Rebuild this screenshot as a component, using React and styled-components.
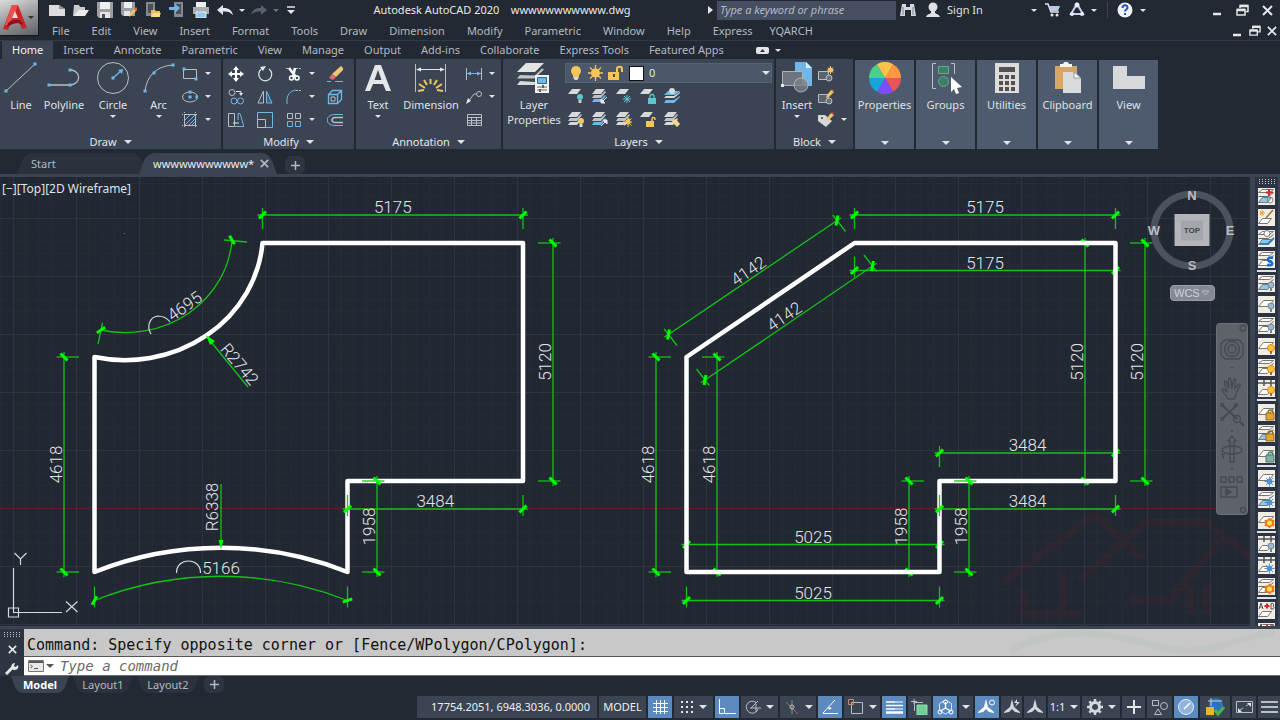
import React from "react";
import styled, { createGlobalStyle, css } from "styled-components";

const c = {
  bg: "#222933",
  canvas: "#212832",
  panel: "#3b4453",
  raised: "#4e5a6d",
  line: "#323c48",
  text: "#dfe2e6",
  dim: "#b4b9c0",
  blue: "#5b8abf",
  sky: "#6cb5e6",
  paper: "#d8dadc",
  yellow: "#f4c55c",
  green: "#00ff00",
};

const Global = createGlobalStyle`
  * { box-sizing: border-box; }
  body { margin: 0; background: ${c.bg}; }
  button, input, select { font: inherit; color: inherit; border: 0; background: none; padding: 0; margin: 0; }
  button { cursor: pointer; }
`;

const Screen = styled.div`
  min-height: 100vh;
  display: flex;
  flex-direction: column;
  background: ${c.bg};
  color: ${c.text};
  font: 11px/16px "Noto Sans", "Open Sans", sans-serif;
  overflow: hidden;
`;

/* ---------- shared bits ---------- */
const Svg = ({ w = 16, h = 16, children, ...rest }) => (
  <svg width={w} height={h} viewBox={`0 0 ${w} ${h}`} fill="none" aria-hidden="true" {...rest}>
    {children}
  </svg>
);

const CaretShape = styled.span`
  flex: none;
  width: 0;
  height: 0;
  border: solid transparent;
  border-width: ${(p) => (p.$big ? "4px 4px 0" : "3px 3px 0")};
  border-top-color: ${(p) => p.$color || c.text};
`;

const IconButton = styled.button`
  flex: none;
  display: flex;
  align-items: center;
  justify-content: center;
  gap: 5px;
  width: ${(p) => p.$w || 24}px;
  height: ${(p) => p.$h || 20}px;
`;

/* ---------- header ---------- */
const Header = styled.header`
  display: flex;
  border-bottom: 1px solid ${c.line};
`;
const Logo = styled.button`
  flex: none;
  width: 39px;
  height: 36px;
  display: flex;
  align-items: center;
  gap: 1px;
  padding-left: 3px;
  background: linear-gradient(160deg, #dcdcdc, #8b8d90 60%, #5e6064);
  border-right: 1px solid #14181e;
  border-bottom: 1px solid #14181e;
`;
const HeaderRows = styled.div`
  flex: 1;
  min-width: 0;
`;
const TitleRow = styled.div`
  display: flex;
  align-items: center;
  height: 20px;
  padding: 0 0 0 6px;
`;
const Title = styled.h1`
  flex: 1;
  margin: 0;
  font: inherit;
  color: #e6e8ea;
  text-align: center;
  white-space: pre;
`;
const Search = styled.input`
  flex: none;
  width: 179px;
  height: 19px;
  padding: 0 3px 1px;
  background: #454f61;
  font-style: italic;
  &::placeholder { color: #b3bac4; opacity: 1; }
`;
const SignIn = styled.button`
  flex: none;
  display: flex;
  align-items: center;
  gap: 7px;
  width: 107px;
  padding-left: 6px;
`;
const Divider = styled.span`
  width: 1px;
  height: 16px;
  margin: 0 5px 0 8px;
  background: #3d4652;
`;
const WindowButtons = styled.div`
  display: flex;
  align-items: center;
  margin-left: ${(p) => (p.$small ? "auto" : "56px")};
`;
const MenuRow = styled.nav`
  display: flex;
  align-items: center;
  height: 20px;
  padding: 2px 0 0 13px;
`;
const MenuItem = styled.button`
  padding-right: ${(p) => p.$gap}px;
  color: ${c.dim};
  line-height: 18px;
`;

/* ---------- ribbon ---------- */
const RibbonTabs = styled.nav`
  display: flex;
  align-items: stretch;
  height: 18px;
  padding-left: 2px;
`;
const RibbonTab = styled.button`
  padding: 0 10px;
  line-height: 18px;
  color: ${(p) => (p.$active ? "#f0f2f4" : c.dim)};
  background: ${(p) => (p.$active ? c.panel : "none")};
`;
const RibbonToggle = styled.button`
  display: flex;
  align-items: center;
  gap: 6px;
  margin-left: 22px;
`;
const Ribbon = styled.div`
  display: flex;
  height: 90px;
  gap: 2px;
`;
const Panel = styled.section`
  flex: none;
  display: flex;
  flex-direction: column;
  width: ${(p) => p.$w}px;
  background: ${c.panel};
`;
const PanelBody = styled.div`
  flex: 1;
  display: flex;
  padding-left: ${(p) => p.$pad || 0}px;
`;
const PanelTitle = styled.button`
  display: flex;
  align-items: center;
  justify-content: center;
  gap: 7px;
  height: 16px;
  padding-top: 1px;
  color: #e4e7ea;
`;
const BigButton = styled.button`
  flex: none;
  display: flex;
  flex-direction: column;
  align-items: center;
  width: ${(p) => p.$w}px;
  padding-top: 3px;
  line-height: 15px;
  & > svg { margin-bottom: 3px; }
  & > ${CaretShape} { margin-top: 3px; }
`;
const ToolGrid = styled.div`
  display: grid;
  grid-template-columns: ${(p) => p.$cols};
  grid-auto-rows: 23px;
  align-content: start;
  padding: 3px 0 0 ${(p) => p.$pad || 0}px;
`;
const Tool = styled.button`
  display: flex;
  align-items: center;
  gap: 7px;
`;
const Collapsed = styled.button`
  flex: none;
  display: flex;
  flex-direction: column;
  align-items: center;
  width: 59px;
  height: 89px;
  margin-top: 1px;
  padding: 2px 0 4px;
  background: ${c.raised};
  line-height: 15px;
  & > svg { margin-bottom: 3px; }
  & > ${CaretShape} { margin-top: auto; }
`;
const LayerArea = styled.div`
  display: flex;
  flex-direction: column;
  padding-top: 4px;
`;
const LayerBox = styled.label`
  display: flex;
  align-items: center;
  gap: 5px;
  width: 207px;
  height: 20px;
  padding: 0 1px 0 3px;
  background: #4c5869;
  border: 1px solid #566376;
`;
const LayerSelect = styled.select`
  flex: 1;
  appearance: none;
  outline: 0;
`;
const Swatch = styled.span`
  width: 15px;
  height: 15px;
  background: #fff;
  border: 1px solid #111;
`;
const LayerTools = styled.div`
  display: grid;
  grid-template-columns: repeat(5, 24px);
  grid-auto-rows: 23px;
  padding: 1px 0 0 3px;
`;

/* ---------- file tabs ---------- */
const FileTabs = styled.div`
  display: flex;
  align-items: flex-end;
  height: 28px;
  padding-left: 21px;
  border-bottom: 3px solid ${c.panel};
`;
const slanted = css`
  position: relative;
  isolation: isolate;
  &::before, &::after {
    content: "";
    position: absolute;
    z-index: -1;
    top: 0;
    bottom: 0;
    width: 60%;
    background: ${(p) => (p.$active ? c.panel : "#2b323e")};
  }
`;
const FileTab = styled.div`
  ${slanted}
  display: flex;
  align-items: center;
  gap: 6px;
  width: ${(p) => p.$w}px;
  height: 21px;
  padding-left: 10px;
  color: ${(p) => (p.$active ? "#e8eaec" : c.dim)};
  &::before { left: 0; transform: skewX(-20deg); border-radius: 8px 0 0 0; }
  &::after { right: 0; transform: skewX(20deg); border-radius: 0 8px 0 0; }
`;
const AddTab = styled.button`
  width: 20px;
  height: ${(p) => p.$h}px;
  margin-left: ${(p) => p.$ml}px;
  display: flex;
  align-items: center;
  justify-content: center;
  background: #2d3541;
  border-radius: 6px;
`;

/* ---------- work area ---------- */
const Work = styled.main`
  flex: 1;
  display: flex;
  min-height: 449px;
`;
const Canvas = styled.div`
  flex: 1;
  position: relative;
  overflow: hidden;
  background: ${c.canvas};
`;
const Drawing = styled.svg`
  position: absolute;
  inset: 0;
  width: 100%;
  height: 100%;
`;
const ViewLabel = styled.button`
  position: absolute;
  left: 2px;
  top: 4px;
  font-size: 12px;
`;
const Cube = styled.div`
  position: absolute;
  top: 6px;
  right: 12px;
`;
const Wcs = styled.button`
  position: absolute;
  top: 108px;
  right: 35px;
  display: flex;
  align-items: center;
  justify-content: space-between;
  width: 45px;
  height: 16px;
  padding: 0 4px 0 3px;
  border-radius: 4px;
  border: 1px solid #9a9eaa;
  background: #858995;
  color: #d0d2d8;
  font: 11px/14px "Liberation Sans", sans-serif;
`;
const NavBar = styled.div`
  position: absolute;
  top: 146px;
  right: 2px;
`;
const Dock = styled.aside`
  flex: none;
  width: 30px;
  height: 449px;
  overflow: hidden;
  border-left: 5px solid ${c.panel};
  border-right: 2px solid ${c.panel};
  background: #2c3443;
  display: flex;
  flex-direction: column;
  align-items: center;
  padding-top: 2px;
  gap: 4px;
`;
const DockGroup = styled.div`
  display: flex;
  flex-direction: column;
  gap: 4px;
  align-items: center;
  & + & { border-top: 2px solid #dfe2e6; padding: 3px 1px 0; margin-top: -2px; }
`;
const DockButton = styled.button`
  width: 17px;
  height: 17px;
  & > svg { display: block; }
`;

/* ---------- command line ---------- */
const Command = styled.section`
  display: flex;
  height: 50px;
  border-top: 3px solid ${c.panel};
  color: #111;
  font: 15px/18px "DejaVu Sans Mono", monospace;
`;
const CommandSide = styled.div`
  width: 24px;
  display: flex;
  flex-direction: column;
  align-items: center;
  justify-content: space-between;
  padding: 3px 0 1px;
  background: #2d3543;
`;
const CommandMain = styled.div`
  flex: 1;
  position: relative;
  border-bottom: 1px solid #6d6f72;
`;
const Output = styled.p`
  margin: 0;
  height: 28px;
  padding: 7px 3px 0;
  background: #c8c8c8;
  border-bottom: 1px solid #555;
  white-space: nowrap;
`;
const Prompt = styled.label`
  display: flex;
  align-items: center;
  gap: 2px;
  height: 18px;
  padding-left: 4px;
  background: #fff;
`;
const PromptInput = styled.input`
  flex: 1;
  margin-left: 4px;
  font-size: 14px;
  font-style: italic;
  outline: 0;
  &::placeholder { color: #6b6b6b; opacity: 1; }
`;
const Swoosh = styled.svg`
  position: absolute;
  right: 0;
  top: 0;
  pointer-events: none;
`;

/* ---------- bottom bars ---------- */
const LayoutTabs = styled.div`
  display: flex;
  height: 19px;
  padding: 0 0 2px 14px;
`;
const LayoutTab = styled.button`
  ${slanted}
  width: ${(p) => p.$w}px;
  margin-right: 10px;
  line-height: 17px;
  font-weight: ${(p) => (p.$active ? 700 : 400)};
  color: ${(p) => (p.$active ? "#fff" : c.dim)};
  &::before { left: 0; transform: skewX(20deg); border-radius: 0 0 0 6px; }
  &::after { right: 0; transform: skewX(-20deg); border-radius: 0 0 6px 0; }
`;
const StatusBar = styled.footer`
  display: flex;
  justify-content: flex-end;
  align-items: flex-start;
  gap: 2px;
  height: 25px;
  padding-top: 1px;
`;
const StatusButton = styled.button`
  flex: none;
  display: flex;
  align-items: center;
  justify-content: center;
  gap: 5px;
  width: ${(p) => p.$w}px;
  height: 22px;
  padding-left: ${(p) => p.$pad || 0}px;
  color: #eef0f2;
  background: ${(p) => (p.$on ? c.blue : c.panel)};
`;

/* ---------- icons ---------- */
const W = "#e4e6e8";
const G = "#b9bec6";
const B = "#6fb7e9";

const Dots = ({ pts }) => pts.map(([x, y]) => <rect key={`${x}-${y}`} x={x - 1.5} y={y - 1.5} width="3" height="3" fill={B} />);

const Sheet = ({ x = 0, y = 0, s = 1, fill = "#d6d8da" }) => (
  <path transform={`translate(${x} ${y}) scale(${s})`} d="M4 0h9l-4 5H0z" fill={fill} />
);

const qat = {
  New: <Svg><path d="M0 3h10l6 4v7H0z" fill="#dcdcdc" /><path d="M10 3v4h6z" fill="#8d8f92" /></Svg>,
  Open: <Svg><path d="M1 3h5l1 2h5v3H5l-3 6H0z" fill="#c9c9c9" /><path d="M5 8h11l-4 6H1z" fill="#ececec" /></Svg>,
  Save: <Svg><path d="M0 0h16v16H2l-2-2z" fill="#9b9fa4" /><path d="M3 0h10v7H3z" fill="#efefef" /><path d="M3 10h10v6H3z" fill="#e4e4e4" /><path d="M5 12h3v4H5z" fill="#454b55" /></Svg>,
  "Save As": <Svg><path d="M0 0h14v14H2l-2-2z" fill="#9b9fa4" /><path d="M3 0h8v6H3z" fill="#efefef" /><path d="M3 9h6v5H3z" fill="#e4e4e4" /><path d="M8 15l1-4 5-5 2 2-5 5z" fill={c.yellow} /><path d="M13 7l2-2 2 2-2 2z" fill="#d9604e" /></Svg>,
  "Open from Web": <Svg><path d="M1 0h9v14H1z" fill="#85898e" /><path d="M3 2h5v9H3z" fill="#4b5058" /><path d="M6 8h4l1 1h4v6H6z" fill="#e6bd58" /><path d="M8 11h8l-2 4H6z" fill="#ffdc87" /></Svg>,
  "Save to Web": <Svg><path d="M5 0h9v15H5z" fill="#85898e" /><path d="M7 2h5v10H7z" fill="#4b5058" /><path d="M0 5h6V2l5 4-5 5V8H0z" fill={B} /></Svg>,
  Plot: <Svg><path d="M3 0h10v5H3z" fill="#eee" /><path d="M0 5h16v7H0z" fill="#a9adb1" /><path d="M3 10h10v6H3z" fill="#8ec8ef" stroke="#eee" /></Svg>,
  Undo: <Svg><path d="M6 3L0 8l6 5v-3.500c4-.5 7 .5 10 3.500-1-5-5-7.500-10-7z" fill={W} /></Svg>,
  Redo: <Svg><path d="M10 3l6 5-6 5v-3.500c-4-.5-7 .5-10 3.500 1-5 5-7.500 10-7z" fill="#59616c" /></Svg>,
};

const LogoMark = () => (
  <Svg w={24} h={28}>
    <path d="M0 25L9 1h6l9 23-5 1-3-7H8l-3 8z" fill="#c9242b" />
    <path d="M9 1h6l-5 12-5 8H2z" fill="#e8504e" />
    <path d="M9 14h6l-3-7z" fill="#dcdcdc" />
    <path d="M5 19c6-4 11-4 14-1l1 3c-5-3-10-2-16 2z" fill="#8e1218" />
  </Svg>
);

const Restore = ({ s = 13 }) => (
  <Svg w={13} h={13} width={s} height={s}>
    <path d="M4 4V1.500h8v6H9.500" stroke={W} strokeWidth="1.500" /><path d="M4 2h8" stroke={W} strokeWidth="2.500" />
    <path d="M1 5.500h8V11H1z" stroke={W} strokeWidth="1.500" /><path d="M1 6h8" stroke={W} strokeWidth="2.500" />
  </Svg>
);
const Close = ({ s = 11, color = W }) => (
  <Svg w={11} h={11} width={s} height={s}><path d="M1 1l9 9M10 1l-9 9" stroke={color} strokeWidth="2" /></Svg>
);
const Minimize = () => <Svg w={9} h={12}><path d="M0 10h8" stroke={W} strokeWidth="2.500" /></Svg>;

const DrawIcons = {
  Line: <Svg w={34} h={32}><path d="M2 29L31 2" stroke={G} /><Dots pts={[[2, 29], [31, 2]]} /></Svg>,
  Polyline: <Svg w={34} h={32}><path d="M2 23h21c12-1 11-15 0-15" stroke={G} strokeWidth="1.300" /><Dots pts={[[2, 23], [23, 23], [23, 8]]} /></Svg>,
  Circle: <Svg w={34} h={32}><circle cx="17" cy="16" r="15.500" stroke={G} /><path d="M17 16l9-8" stroke={B} strokeWidth="1.300" /><path d="M22 8l5-1-1 5z" fill={B} /><Dots pts={[[17, 16]]} /></Svg>,
  Arc: <Svg w={34} h={32}><path d="M3 29C5 13 15 4 31 3" stroke={G} /><Dots pts={[[3, 29], [12, 11], [31, 3]]} /></Svg>,
};

const DrawSmall = [
  ["Rectangle", <Svg><path d="M1.500 3.500h13v9h-13z" stroke={G} /><Dots pts={[[2, 3], [14, 13]]} /></Svg>, true],
  ["Ellipse", <Svg><ellipse cx="8" cy="8" rx="7.500" ry="5" stroke={G} /><Dots pts={[[8, 8], [8, 3], [15, 8]]} /></Svg>, true],
  ["Hatch", <Svg><path d="M2.500 2.500h11v11h-11z" stroke={G} /><path d="M0 2.500h16M0 13.500h16M2.500 0v16M13.500 0v16" stroke={G} strokeDasharray="1 1" /><path d="M3 8l5-5M3 13L13 3M7 13l6-6M10 13l3-3" stroke={B} /></Svg>, true],
];

const ModifyTools = [
  ["Move", <Svg><path d="M8 1v14M1 8h14" stroke="#fff" strokeWidth="2" /><path d="M8 0l3 4H5zM8 16l3-4H5zM0 8l4-3v6zM16 8l-4-3v6z" fill="#fff" /></Svg>],
  ["Rotate", <Svg><path d="M12 3a6.500 6.500 0 1 1-7.500 0" stroke={W} strokeWidth="1.200" /><path d="M3 1l6-1-3 5z" fill={W} /></Svg>],
  ["Trim", <Svg><path d="M0 2.500h4M10 2.500h6" stroke={G} strokeDasharray="2 1" /><path d="M3 2l7 9M9 2L7 11" stroke="#fff" strokeWidth="2.500" /><circle cx="5.500" cy="12" r="2" stroke="#fff" strokeWidth="1.500" /><circle cx="11" cy="12" r="2" stroke="#fff" strokeWidth="1.500" /></Svg>, true],
  ["Erase", <Svg><path d="M14 0l3 3-8 8-4-3z" fill="#f0c67c" /><path d="M5 8l4 3-3 3-4-2z" fill="#e66a6c" /><path d="M0 15.500h4M8 15.500h8" stroke={B} /></Svg>],
  ["Copy", <Svg><circle cx="4" cy="3.500" r="3" stroke={G} /><circle cx="6" cy="12" r="3" stroke={B} /><circle cx="12.500" cy="12" r="3" stroke={B} /><path d="M8 2.500h5v3" stroke={W} /><path d="M11 4h4l-2 3z" fill={W} /></Svg>],
  ["Mirror", <Svg><path d="M6.500 2v12H1z" stroke={G} /><path d="M9.500 2v12H15z" stroke={B} fill="#39648b" /></Svg>],
  ["Fillet", <Svg><path d="M1 15V10C2 4 5 2 10 1" stroke={B} /><path d="M10 1.500h6" stroke={G} strokeDasharray="2 1" /></Svg>, true],
  ["Extrude", <Svg><path d="M1.500 5.500h9v9h-9zM1.500 5.500l4-4h9v9l-4 4M10.500 5.500l4-4" stroke={B} strokeWidth="1.300" /><path d="M4 8h4v4H4z" stroke={G} /></Svg>],
  ["Stretch", <Svg><path d="M.500 1.500h6v13h-6z" stroke={G} /><path d="M10 1.500h2l4 13H7M10 2v6" stroke={B} /><path d="M5 11h6" stroke={W} /></Svg>],
  ["Scale", <Svg><path d="M.500.500h15v15H.500z" stroke={B} /><path d="M.500 7.500h8v8h-8z" stroke={G} /></Svg>],
  ["Array", <Svg><path d="M1.500 1.500h5v5h-5zM9.500 1.500h5v5h-5z" stroke={G} /><path d="M1.500 9.500h5v5h-5zM9.500 9.500h5v5h-5z" stroke={B} /></Svg>, true],
  ["Offset", <Svg><path d="M16 2.500H7C-2 3-2 13 7 13.500h9" stroke={B} /><path d="M16 5.500H8C4 6 4 10 8 10.500h8" stroke={G} strokeWidth="1.500" /></Svg>],
];

const TextIcon = () => <Svg w={34} h={32}><path d="M14 3h6l10 26h-5l-3-7H12l-3 7H4zm3 5l-3.500 10h7z" fill={W} /></Svg>;
const DimIcon = () => (
  <Svg w={34} h={32}>
    <path d="M1.500 2v28M31.500 2v28" stroke={G} /><path d="M3 7.500h27" stroke={W} /><path d="M2 7.500l5-2v4zM31 7.500l-5-2v4z" fill={W} />
    <g stroke={c.yellow} strokeWidth="2"><path d="M16.500 17v5M10 18l3 5M23 18l-3 5M5 22l6 4M28 22l-6 4M4 29l6-1M29 29l-6-1" /></g>
  </Svg>
);
const AnnoSmall = [
  ["Linear", <Svg><path d="M.500 2v12M15.500 2v12" stroke={G} /><path d="M1 7.500h14" stroke={B} /><path d="M1 7.500l4-2v4zM15 7.500l-4-2v4z" fill={B} /></Svg>, true],
  ["Leader", <Svg><circle cx="13" cy="5" r="2.500" stroke={G} /><path d="M10.500 5H8l-6 8" stroke={G} /><path d="M0 15l2-6 3 3z" fill={W} /></Svg>, true],
  ["Table", <Svg><path d="M1.500 2.500h14v11h-14zM1.500 5.500h14M1.500 8.500h14M1.500 11h14M5.500 5v9M10.500 5v9" stroke={G} /></Svg>],
];

const LayerPropsIcon = () => (
  <Svg w={34} h={32}>
    <path d="M9 1h18l-9 9H0z" fill="#e4e4e4" /><path d="M3 13l-3 3.500h17l10-9-2-1-7 7z" fill="#c4c6c9" /><path d="M3 19l-3 4h17l10-9-2-1-7 7z" fill="#d9dadc" />
    <path d="M18 13h14v18H18z" fill="#f3f3f3" /><path d="M20.500 15.500h9v6h-9z" fill={B} stroke="#2e6794" /><path d="M20 25h10M20 28h10" stroke="#666" /><path d="M26 23v3M23 27v3" stroke="#666" strokeWidth="2" />
  </Svg>
);
const Bulb = () => <Svg w={14} h={16}><circle cx="7" cy="6" r="5" fill={c.yellow} /><path d="M4 9h6v3H4z" fill={c.yellow} /><path d="M4.500 12h5v2h-1v1h-3v-1h-1z" fill="#dadada" /></Svg>;
const Sun = () => <Svg w={15} h={16}><circle cx="7.500" cy="8" r="4.500" fill={c.yellow} /><path d="M7.500 0v16M0 8h15M2 2.500l11 11M13 2.500l-11 11" stroke={c.yellow} strokeWidth="1.300" /></Svg>;
const Lock = () => <Svg w={16} h={16}><path d="M0 7h11v8H0z" fill={c.yellow} /><path d="M9 7V4c0-3 5-3 5 0v3" stroke={c.yellow} strokeWidth="2" /><path d="M5 9h2v3H5z" fill="#5c4a20" /></Svg>;

const cyan = "#59c9cf";
const StackBase = ({ one, blue }) => (
  <>
    <Sheet x={0} y={1} s={1} />
    {!one && <><path d="M2 7l-2 3h9l5-6-1-1-4 4z" fill="#bfc2c6" /><path d="M2 11l-2 3h9l5-6-1-1-4 4z" fill={blue ? B : "#d6d8da"} /></>}
  </>
);
const LayerToolIcons = [
  ["Off", <Svg><StackBase one /><circle cx="12" cy="9" r="3" fill={cyan} /><path d="M10.500 12h3v3h-3z" fill="#ccc" /></Svg>],
  ["Isolate", <Svg><StackBase blue /><path d="M15 9l-5 5M9 15v-4l4 4z" stroke={W} fill={W} /></Svg>],
  ["Freeze", <Svg><StackBase one /><path d="M11 7v8M7 11h8M8 8l6 6M14 8l-6 6" stroke={cyan} /></Svg>],
  ["Lock", <Svg><StackBase one /><path d="M8 10h8v6H8z" fill={cyan} /><path d="M10 10V8c0-2 4-2 4 0v2" stroke={cyan} strokeWidth="1.300" /></Svg>],
  ["Make Current", <Svg><path d="M4 3h12l-5 4H0z" fill={B} /><path d="M2 8l-2 2h10l6-5v-1l-6 4z" fill="#d6d8da" /><path d="M2 12l-2 3h10l6-6v-1l-6 4z" fill={B} /><circle cx="8" cy="3" r="3" fill="#d6d8da" /></Svg>],
  ["Turn All On", <Svg><StackBase /><circle cx="13" cy="10" r="3" fill={c.yellow} /><path d="M11.500 13h3v3h-3z" fill="#ddd" /></Svg>],
  ["Unisolate", <Svg><StackBase blue /><path d="M9 15l5-5M15 9v4l-4-4z" stroke={W} fill={W} /></Svg>],
  ["Thaw All", <Svg><StackBase /><circle cx="12" cy="11" r="2.500" fill={c.yellow} /><path d="M12 6v10M7 11h9M8.500 7.500l7 7M15.500 7.500l-7 7" stroke={c.yellow} /></Svg>],
  ["Unlock", <Svg><StackBase one /><path d="M6 10h8v6H6z" fill={c.yellow} /><path d="M12 10V8c0-2 3-2 3 0v1" stroke={c.yellow} strokeWidth="1.500" /></Svg>],
  ["Match Layer", <Svg><StackBase /><path d="M9 9l3-1 4 5-3 3-5-5z" fill="#f4d98a" /></Svg>],
];

const InsertIcon = () => (
  <Svg w={34} h={32}>
    <path d="M15 0h11l6 6v18H15z" fill={B} /><path d="M26 0v6h6z" fill="#d7eefc" />
    <path d="M2.500 9.500h20v14h-20z" fill="#6f757e" stroke="#aeb3ba" /><circle cx="21" cy="23" r="7" fill="#7a8088" fillOpacity=".8" stroke="#aeb3ba" /><path d="M1 22h3v3H1z" fill={W} />
  </Svg>
);
const Blk = ({ children }) => <Svg><path d="M.500 5.500h10v8H.500z" fill="#596270" stroke={G} /><circle cx="11" cy="12" r="3" fill="#69717d" stroke={G} />{children}</Svg>;
const BlockSmall = [
  ["Create", <Blk><circle cx="12.500" cy="4" r="2.500" fill={c.yellow} /><path d="M12.500 0v8M9 4h7M10 1.500l5 5M15 1.500l-5 5" stroke={c.yellow} /></Blk>],
  ["Edit", <Blk><path d="M8 9l1-3 4-5 3 2-5 5z" fill={c.yellow} /><path d="M13 1l1-1 2 2-1 1z" fill="#e0574b" /></Blk>],
  ["Edit Attributes", <Svg><path d="M0 3h7l7 6-6 6L0 9z" fill="#d5d7da" /><circle cx="4" cy="6" r="1" fill="#444" /><path d="M8 9l1-3 4-5 3 2-5 5z" fill={c.yellow} /><path d="M13 1l1-1 2 2-1 1z" fill="#e0574b" /></Svg>, true],
];

const wheel = ["#ff9640", "#e9545c", "#7c4dff", "#16a5d6", "#4ccf86", "#ffc24a"];
const polar = (deg, r) => [16 + r * Math.cos((deg * Math.PI) / 180), 16 + r * Math.sin((deg * Math.PI) / 180)];
const ColorWheel = () => (
  <Svg w={32} h={32}>
    {wheel.map((f, i) => {
      const [x1, y1] = polar(-60 + i * 60, 16);
      const [x2, y2] = polar(i * 60, 16);
      return <path key={f} d={`M16 16L${x1} ${y1}A16 16 0 0 1 ${x2} ${y2}z`} fill={f} />;
    })}
  </Svg>
);
const CollapsedPanels = [
  ["Properties", <ColorWheel />],
  ["Groups", <Svg w={32} h={32}><path d="M6 1.500H2.500v25H6M21 1.500h3.500V12" stroke={G} /><path d="M8.500 4.500h10v7h-10z" fill="#3f7d65" stroke="#5fae8b" /><circle cx="13.500" cy="19.500" r="5" fill="#3f7d65" stroke="#5fae8b" /><path d="M21 15l11 10-5 1 2 5-3 1-2-5-3 3z" fill="#fff" /></Svg>],
  ["Utilities", <Svg w={26} h={32}><path d="M1 1h24v30H1z" fill="#dcdcdc" /><path d="M5 5h16v5H5z" fill="#54514f" />{[13, 19, 25].map((y) => [5, 11, 17].map((x) => <rect key={`${x}${y}`} x={x} y={y} width="4" height="4" fill="#54514f" />))}</Svg>],
  ["Clipboard", <Svg w={28} h={32}><path d="M1 4h22v23H1z" fill="#d9a566" /><path d="M6 5V2h3c1-3 5-3 6 0h3v3z" fill="#f5f5f5" /><path d="M9 10h12l6 6v15H9z" fill="#dadbdc" /><path d="M20 10v6h7z" fill="#f9f9f9" stroke="#555" strokeWidth=".5" /></Svg>],
  ["View", <Svg w={32} h={32}><path d="M0 4h14v10h18v13H0z" fill="#d8d9db" /></Svg>],
];

/* ---------- drawing ---------- */
const dimGreen = "#12c316";

/* An oblique tick: a short heavy stroke at 45 degrees to the dimension line. */
const Slash = ({ x, y, r }) => (
  <path d="M-5 0H5" strokeWidth="3" stroke={c.green} transform={`translate(${x} ${y}) rotate(${r})`} />
);

/* A linear dimension: line, extension marks towards `ext`, oblique ticks and its value. */
const Dim = ({ a, b, ext, value }) => {
  const angle = (Math.atan2(b[1] - a[1], b[0] - a[0]) * 180) / Math.PI;
  const rad = (angle * Math.PI) / 180;
  const ox = Math.cos(rad) * 5;
  const oy = Math.sin(rad) * 5;
  const mx = (a[0] + b[0]) / 2;
  const my = (a[1] + b[1]) / 2;
  return (
    <g>
      <path d={`M${a[0] - ox} ${a[1] - oy}L${b[0] + ox} ${b[1] + oy}`} stroke={dimGreen} strokeWidth="1.3" />
      {[a, b].map(([x, y]) => (
        <g key={`${x}-${y}`}>
          <path d={`M${x - ext[0] / 2} ${y - ext[1] / 2}L${x + ext[0]} ${y + ext[1]}`} stroke={dimGreen} strokeWidth="1.3" />
          <Slash x={x} y={y} r={angle - 45} />
        </g>
      ))}
      <text textAnchor="middle" transform={`translate(${mx} ${my}) rotate(${angle})`} y="-2">{value}</text>
    </g>
  );
};
const H = (x1, x2, y, e, value) => ({ a: [x1, y], b: [x2, y], ext: [0, e], value });
const V = (x, y1, y2, e, value) => ({ a: [x, y2], b: [x, y1], ext: [e, 0], value });

const innerDims = [
  H(854.5, 1115.5, 270.5, -14, "5175"),
  V(1085, 243, 481, 0, "5120"),
  H(939.5, 1115.5, 453, 14, "3484"),
  H(686.5, 939.5, 544.5, 0, "5025"),
  V(717, 357, 572, -15, "4618"),
  V(909, 481, 572, 15, "1958"),
  { a: [705, 380], b: [872.5, 266], ext: [-8.5, -11], value: "4142" },
];
const outerDims = [
  H(262.5, 523, 215, 14, "5175"),
  H(347.5, 523, 509, -14, "3484"),
  V(64, 357, 572, 15, "4618"),
  V(553, 243, 481, -15, "5120"),
  V(377, 481, 572, -15, "1958"),
  H(854.5, 1115.5, 215, 14, "5175"),
  H(939.5, 1115.5, 509, -14, "3484"),
  H(686.5, 939.5, 600.5, -14, "5025"),
  V(656, 357, 572, 15, "4618"),
  V(1145, 243, 481, -15, "5120"),
  V(969, 481, 572, -15, "1958"),
  { a: [668.5, 334.5], b: [837, 220.5], ext: [8.5, 11], value: "4142" },
];

const ArcTick = ({ x, y, r, ext }) => (
  <g>
    <path d={ext} stroke={dimGreen} strokeWidth="1.3" transform={`translate(${x} ${y})`} />
    <Slash x={x} y={y} r={r} />
  </g>
);

const Plan = () => (
  <Drawing fill="none" role="img" aria-label="Dimensioned floor outlines">
    <defs>
      <pattern id="minor" x="13" y="41" width="12.6" height="11.6" patternUnits="userSpaceOnUse">
        <path d="M.5 0v11.6M0 .5h12.6" stroke="#252c37" />
      </pattern>
      <pattern id="major" x="13" y="41" width="63" height="58" patternUnits="userSpaceOnUse">
        <path d="M.5 0v58M0 .5h63" stroke="#2d3540" />
      </pattern>
    </defs>
    <rect width="100%" height="100%" fill="url(#minor)" />
    <rect width="100%" height="100%" fill="url(#major)" />
    <rect y="331" width="100%" height="1" fill="#5e1d27" />
    <g transform="translate(0 -177)">
      <g stroke="#8a1f28" strokeWidth="8" opacity=".1">
        <path d="M1002 583L1095 515l48 44M1080 580l25-22 40-35 60-1 60 45M1023 590v24h60M1063 572v42M1190 585v28M1206 585v28M1130 600h40l50-60" />
      </g>
      <g fontFamily="Roboto, sans-serif" fontWeight="300" fontSize="17">
        <g fill="#e3e5e8">
          {innerDims.map((d, i) => <Dim key={i} {...d} />)}
        </g>
        <g stroke="#fff" strokeWidth="4.500" strokeLinejoin="round">
          <path d="M94.500 357A138 127.700 0 0 0 262.500 243H523V481H347.500V572A318.800 295.400 0 0 0 94.500 572z" />
          <path d="M686.500 357L854.500 243H1115.500V481H939.500V572H686.500z" />
        </g>
        <g fill="#e3e5e8">
          {outerDims.map((d, i) => <Dim key={i} {...d} />)}
          <text textAnchor="middle" transform="translate(188 311) rotate(-35)">4695</text>
          <text textAnchor="middle" transform="translate(235 368) rotate(50)">R2742</text>
          <text textAnchor="middle" transform="translate(218 507) rotate(-90)">R6338</text>
          <text textAnchor="middle" x="221" y="574">5166</text>
        </g>
      </g>
      <g stroke={dimGreen} strokeWidth="1.300">
        <path d="M101 330A107 100 0 0 0 232 240" />
        <path d="M94.500 600.500A318.800 295.400 0 0 1 347.500 600.500" />
        <path d="M207 337L248 387M221 484V547" />
      </g>
      <path d="M206 335l9 6-5 4zM221 549l-2.500-9h5z" fill={c.green} />
      <ArcTick x={101} y={330} r={-35} ext="M1.500 -7L-3 14" />
      <ArcTick x={232} y={240} r={60} ext="M-8 0L15 2" />
      <ArcTick x={94.5} y={600.5} r={-60} ext="M0 -14V7" />
      <ArcTick x={347.5} y={600.5} r={-20} ext="M0 -14V7" />
      <g stroke="#d5d8dc" strokeWidth="1.200">
        <path d="M151 334C146 326 150 317 158 316C163 316 167 318 170 322" />
        <path d="M176.500 573C176 557 201 557 200.500 573" />
        <path d="M13.500 568V612.500H62M8.500 608h10v9h-10z" />
        <path d="M14.500 553l6 6 6-6M20.500 559v6M66 601.500l11.500 10.500M77.500 601.500L66 612" />
      </g>
      <path d="M124 233h1v1h-1z" fill="#6d7580" />
    </g>
  </Drawing>
);

const ViewCube = () => (
  <Svg w={92} h={96}>
    <ellipse cx="46" cy="47" rx="38" ry="36" stroke="#4b535e" strokeWidth="7" />
    <path d="M28.500 31h35v32h-35z" fill="#b3b5b8" /><path d="M35 37.500h22v20H35z" fill="#a3a7ad" />
    <g fill="#b9bcc0" fontFamily="Liberation Sans, sans-serif" fontWeight="700" fontSize="13" textAnchor="middle">
      <text x="46" y="17">N</text><text x="46" y="87">S</text><text x="8" y="52">W</text><text x="84" y="52">E</text>
      <text x="46" y="50" fill="#3e444d" fontSize="8">TOP</text>
    </g>
  </Svg>
);

const NavIcons = () => (
  <Svg w={32} h={192}>
    <rect x=".5" y=".5" width="31" height="191" rx="3" fill="#5e6369" stroke="#6c7178" />
    <g stroke="#454a51" strokeWidth="1.300">
      <circle cx="27" cy="5" r="3" />
      <path d="M9 17h14l4 4v11l-4 4H9l-4-4V21z" /><circle cx="16" cy="26" r="7.500" /><circle cx="16" cy="26" r="4" />
      <path d="M11 74c-3-4-6-7-5-8 2-1 4 3 5 3-1-5-4-11-2-11 2-1 3 7 4 7-1-6-1-10 1-10s1 9 2 10c1-5 1-9 3-9s-1 7 0 10c2-3 4-6 5-5 1 2-4 7-4 11l-2 4h-6z" />
      <path d="M6 82l15 14M21 82L6 96" strokeWidth="1.800" /><circle cx="6" cy="82" r="1.500" /><circle cx="20" cy="82" r="1.500" /><circle cx="6" cy="96" r="1.500" /><circle cx="21" cy="96" r="3.500" /><path d="M24 99l4 4" strokeWidth="2" />
      <ellipse cx="16" cy="127" rx="10" ry="4" /><path d="M14 139v-21h-2l4-5 4 5h-2v21zM9 132l-3-1 2 5" />
      <path d="M5 154h5v5H5zM13 154h5v5h-5zM21 154h5v5h-5zM5 164h16v10H5z" /><path d="M10 166l5 3-5 3z" fill="#454a51" />
      <circle cx="27" cy="187" r="2.500" />
    </g>
    <path d="M14 44h4l-2 2zM14 107h4l-2 2zM14 145h4l-2 2z" fill="#454a51" />
  </Svg>
);

const Badge = ({ kind }) => {
  switch (kind) {
    case "cross": return <><path d="M11 1v7M8 4.500h7" stroke="#d8262c" strokeWidth="2" /><circle cx="12" cy="12" r="3" stroke="#888" /></>;
    case "wand": return <><path d="M4 1v6M1 4h6M2 2l4 4M6 2L2 6" stroke="#f0a42a" /><path d="M8 9l7-8" stroke="#a06d35" strokeWidth="1.500" /></>;
    case "blue": return <><circle cx="9" cy="3.500" r="3" fill="#fff" stroke="#777" /><path d="M2 14h8l6-6" stroke="#2f7fc5" strokeWidth="2" /></>;
    case "s": return <path d="M15 7c-6-2-6 3-3 3.500s4 5-3 3.500" stroke="#1669d3" strokeWidth="2.500" />;
    case "gray": return <><circle cx="13" cy="10" r="3" fill="#9db8cc" stroke="#6b8799" /><path d="M12 13h2v3h-2z" fill="#6b8799" /></>;
    case "bulb": return <><circle cx="13" cy="10" r="3.500" fill="#ffc23e" stroke="#e08b17" /><path d="M12 13h2v3h-2z" fill="#a66b18" /></>;
    case "lock": return <><path d="M10 9c0-4 5-4 5 0" stroke="#8e6a28" strokeWidth="1.500" /><path d="M8 9h8v7H8z" fill="#e7a32f" stroke="#8e6a28" /></>;
    case "unlock": return <><path d="M10 9c0-4 5-4 5 0" stroke="#4d7d71" strokeWidth="1.500" /><path d="M8 9h8v7H8z" fill="#7faea2" stroke="#4d7d71" /></>;
    case "snow": return <><circle cx="11.500" cy="11.500" r="2.500" stroke="#3f86c4" fill="#d9efff" /><path d="M11.500 6.500v10M6.500 11.500h10M8 8l7 7M15 8l-7 7" stroke="#4b95d3" /></>;
    case "sun": return <><path d="M11.500 5.500l2 2 3 .5-.5 3 .5 3-3 .5-2 2-2-2-3-.5.500-3-.5-3 3-.5z" fill="#ef7a1d" /><circle cx="11.500" cy="11" r="2.500" fill="#ffe25c" /></>;
    default: return <><path d="M1 7l2-6 2 6M2 5h2M13 7V1.500h2l1 1.500-1 1 1 1.500-1 1.500z" stroke="#555" /><path d="M6.500 4h5M9 1.500v5" stroke="#d8262c" strokeWidth="2" /></>;
  }
};
const DockIcon = ({ kind, n, tint }) => (
  <Svg w={17} h={17}>
    <path d="M0 0h17v17H0z" fill="#f1ede2" />
    {n === 3 && <path d="M4.500 1.500h11l-4 3h-11z" fill="#fff" stroke="#777" />}
    {n === 3 && <path d="M.500 8.500h10l5-4" stroke="#666" />}
    {n === 2 && <path d="M0 3h17M6 0v6M13 0v6" stroke="#4d535b" strokeWidth="1.500" />}
    <path d={n === 1 ? "M5.500 4.500h10l-5 6h-10z" : "M4.500 9.500h9l-4 5h-9z"} fill={tint ? "#8cc8ee" : "#fff"} stroke="#777" />
    <Badge kind={kind} />
  </Svg>
);
const dockGroups = [
  [["cross", 3, 1], ["wand", 0], ["blue", 3, 1], ["s", 3]],
  [["gray", 3, 1], ["gray", 1], ["gray", 3], ["bulb", 1], ["bulb", 3], ["bulb", 2]],
  [["lock", 1], ["lock", 3, 1], ["unlock", 1]],
  [["snow", 1], ["snow", 3, 1], ["sun", 1]],
  [["gray", 2], ["snow", 2], ["sun", 3]],
  [["ab", 0], ["ab", 3]],
];
const GripDots = styled.svg`
  flex: none;
`;
const Grip = () => (
  <GripDots width="18" height="5" viewBox="0 0 18 5" fill="none" aria-hidden="true">
    <path d="M1 .5h16M1 2.500h16M1 4.500h16" stroke="#c6cad0" strokeDasharray="1 2" />
  </GripDots>
);

/* ---------- status icons ---------- */
const person = "M8 0l2 8 6 5v1l-5-1-3-3-3 3-5 1v-1l6-5z";
const S = {
  grid: <Svg><path d="M4.500 1v14M8.500 1v14M12.500 1v14M1 4.500h15M1 8.500h15M1 12.500h15" stroke="#fff" /></Svg>,
  snap: <Svg w={13} h={14}>{[1, 6, 11].map((y) => [0, 5, 10].map((x) => <rect key={`${x}-${y}`} x={x} y={y} width="2" height="2" fill={W} />))}</Svg>,
  ortho: <Svg w={18}><path d="M1.500 0v14.500H18M1.500 9.500h5v5" stroke="#fff" /></Svg>,
  polar: <Svg><path d="M11 3.500A6 6 0 1 0 13 10M5 9h11M6 9l7-7M11 5v8" stroke={G} /></Svg>,
  iso: <Svg><path d="M8 1v14" stroke="#6f9c7a" /><path d="M2 3l12 12" stroke="#a86c70" /><circle cx="8" cy="8" r="2" stroke={G} /></Svg>,
  track: <Svg><path d="M1 14L13 1M1 14.500h15" stroke="#fff" /><path d="M6 8l4 1-3 2z" fill="#fff" /></Svg>,
  osnap: <Svg><path d="M3.500 3.500h11v11h-11z" stroke={G} /><path d="M.500.500h5v5h-5z" stroke="#c48b71" /></Svg>,
  weight: <Svg w={17}><path d="M0 3h9M0 6.500h17M0 10h9" stroke="#fff" strokeWidth="1.500" /><path d="M9 3h8M9 10h8" stroke="#fff" /><path d="M0 13.500h17" stroke="#fff" strokeWidth="2.500" /></Svg>,
  cycle: <Svg w={17}><path d="M6 6h10v10H6z" fill="#6fcf97" stroke="#8fe0b0" /><path d="M3.500 12V3.500H12" stroke={G} /><path d="M3 0v5M0 2.500h6" stroke={G} /></Svg>,
  ucs: <Svg w={17}><path d="M8.500 1l6 3.500v7l-6 3.500-6-3.500v-7z" stroke="#d8e6f4" /><path d="M8.500 3v6l5 3M8.500 9l-5 3" stroke="#fff" strokeWidth="1.300" /><circle cx="8.500" cy="3" r="2" stroke="#fff" /><circle cx="3" cy="13" r="2" stroke="#fff" /><circle cx="14" cy="13" r="2" stroke="#fff" /></Svg>,
  anno: <Svg w={18}><path d={person} fill="#fff" /><circle cx="14" cy="3.500" r="2.500" stroke="#fff" /></Svg>,
  auto: <Svg><path d={person} fill="#d5d8dc" /><path d="M13 0l-3 4h3l-2 4 5-5h-3z" fill="#d5d8dc" /></Svg>,
  scale: <Svg><path d={person} fill="#d5d8dc" /></Svg>,
  gear: <Svg><circle cx="8" cy="8" r="4.500" stroke="#d5d8dc" strokeWidth="3" /><path d="M8 0v3M8 13v3M0 8h3M13 8h3M2.300 2.300l2 2M11.700 11.700l2 2M13.700 2.300l-2 2M4.300 11.700l-2 2" stroke="#d5d8dc" strokeWidth="2.500" /></Svg>,
  plus: <Svg><path d="M8 1v14M1 8h14" stroke={W} strokeWidth="2" /></Svg>,
  iso2: <Svg w={17}><path d="M1.500 1.500h6v5h-6z" stroke={G} /><circle cx="13" cy="7" r="3.500" stroke={G} /><path d="M7 10l3.500 5.500h-7z" stroke={G} /></Svg>,
  clean: <Svg w={18} h={18}><circle cx="9" cy="9" r="7.500" fill="#8fb3da" stroke="#e7eff8" /><path d="M7 11l6-6" stroke="#fff" strokeWidth="1.500" /></Svg>,
  hw: <Svg w={20} h={20}><circle cx="11" cy="8" r="7" fill="#2f73b7" /><path d="M1 10h8v8H1z" fill="#f0b429" /><path d="M3 4h14M6 1v8" stroke="#bcd7ef" /><path d="M10 13l3 4 6-7" stroke="#4bb34c" strokeWidth="3" /></Svg>,
  full: <Svg w={17}><path d="M.500 2.500h16v11h-16z" stroke={G} /><path d="M10 7l3-2M4 11l3-2" stroke={G} /><path d="M11 4h4v4zM2 9v4h4z" fill={W} /></Svg>,
  menu: <Svg w={17}><path d="M0 3h17M0 8h17M0 13h17" stroke={W} strokeWidth="1.500" /></Svg>,
};
const statusItems = [
  ["Grid", 24, S.grid, 1], ["Snap", 39, S.snap, 0, 1], ["Ortho", 24, S.ortho, 1], ["Polar", 37, S.polar, 0, 1],
  ["Isodraft", 36, S.iso, 0, 1], ["Object snap tracking", 24, S.track, 1], ["Object snap", 36, S.osnap, 0, 1],
  ["Lineweight", 24, S.weight, 1], ["Selection cycling", 23, S.cycle], ["Dynamic UCS", 24, S.ucs, 1], ["UCS menu", 14, null, 0, 1],
  ["Annotation visibility", 24, S.anno, 1], ["AutoScale", 21, S.auto], ["Annotation scale", 22, S.scale],
  ["Scale", 32, "1:1", 0, 1], ["Workspace", 38, S.gear, 0, 1], ["Annotation monitor", 23, S.plus], ["Isolate objects", 25, S.iso2],
  ["Clean screen", 24, S.clean, 1], ["Hardware", 30, S.hw], ["Full screen", 24, S.full], ["Customization", 22, S.menu],
];

const menus = ["File", "Edit", "View", "Insert", "Format", "Tools", "Draw", "Dimension", "Modify", "Parametric", "Window", "Help", "Express", "YQARCH"];
const tabs = ["Home", "Insert", "Annotate", "Parametric", "View", "Manage", "Output", "Add-ins", "Collaborate", "Express Tools", "Featured Apps"];

const Tools = ({ items }) => items.map(([name, icon, list]) => (
  <Tool key={name} aria-label={name}>{icon}{list && <CaretShape />}</Tool>
));

export default function App() {
  return (
    <Screen>
      <Global />
      <Header>
        <Logo aria-label="Application menu"><LogoMark /><CaretShape $color="#333" /></Logo>
        <HeaderRows>
          <TitleRow>
            {Object.entries(qat).map(([name, icon]) => (
              <React.Fragment key={name}>
                <IconButton aria-label={name}>{icon}</IconButton>
                {(name === "Undo" || name === "Redo") && (
                  <IconButton $w={10} aria-label={`${name} list`}><CaretShape $color={name === "Redo" ? "#6d747e" : c.text} /></IconButton>
                )}
              </React.Fragment>
            ))}
            <IconButton $w={20} aria-label="Customize"><Svg w={8} h={10}><path d="M0 2h8" stroke={W} strokeWidth="1.500" /><path d="M0 5h8L4 9z" fill={W} /></Svg></IconButton>
            <Title>{"Autodesk AutoCAD 2020    wwwwwwwwwww.dwg"}</Title>
            <IconButton $w={14} aria-label="Collapse search"><Svg w={5} h={8}><path d="M0 0l5 4-5 4z" fill={W} /></Svg></IconButton>
            <Search aria-label="Search" placeholder="Type a keyword or phrase" />
            <IconButton aria-label="Find"><Svg><path d="M2 2h4v3h4V2h4l2 12h-5V8H5v6H0z" fill="#d5d8dc" /><path d="M3 5v8M13 5v8" stroke="#7b828c" /></Svg></IconButton>
            <SignIn><Svg w={14}><circle cx="7" cy="5" r="4.500" fill="#dfe1e4" /><path d="M0 15c1-3 4-3 5-4V8h4v3c1 1 4 1 5 4z" fill="#dfe1e4" /></Svg>Sign In</SignIn>
            <IconButton $w={14} aria-label="Account list"><CaretShape /></IconButton>
            <IconButton aria-label="App store"><Svg><path d="M0 2h3l3 8h8" stroke={W} strokeWidth="1.500" /><path d="M4 4h11l-2 5H6z" fill="#b9c8e4" /><circle cx="7" cy="13" r="1.500" fill={W} /><circle cx="12" cy="13" r="1.500" fill={W} /></Svg></IconButton>
            <IconButton aria-label="Autodesk app"><Svg><path d="M8 2L2 12h12z" stroke="#c9d2f2" strokeWidth="2" /><circle cx="8" cy="3" r="2.500" fill="#e8ebf8" /><circle cx="3" cy="12" r="2" fill="#e8ebf8" /><circle cx="13" cy="12" r="2" fill="#e8ebf8" /></Svg></IconButton>
            <IconButton $w={10} aria-label="App list"><CaretShape /></IconButton>
            <Divider />
            <IconButton aria-label="Help"><Svg><circle cx="8" cy="8" r="7.500" fill="#f0f2f5" /><path d="M5.500 6c0-3.500 5-3.500 5-.5 0 2-2.500 2-2.500 4M8 11v2" stroke="#2456b8" strokeWidth="2" /></Svg></IconButton>
            <IconButton $w={12} aria-label="Help list"><CaretShape /></IconButton>
            <WindowButtons>
              <IconButton $w={25} aria-label="Minimize"><Minimize /></IconButton>
              <IconButton $w={25} aria-label="Restore"><Restore /></IconButton>
              <IconButton $w={25} aria-label="Close"><Close /></IconButton>
            </WindowButtons>
          </TitleRow>
          <MenuRow>
            {menus.map((m) => <MenuItem key={m} $gap={m === "Express" ? 17 : 22}>{m}</MenuItem>)}
            <WindowButtons $small>
              <IconButton $w={17} aria-label="Minimize drawing"><Minimize /></IconButton>
              <IconButton $w={17} aria-label="Restore drawing"><Restore s={12} /></IconButton>
              <IconButton $w={17} aria-label="Close drawing"><Close s={10} /></IconButton>
            </WindowButtons>
          </MenuRow>
        </HeaderRows>
      </Header>

      <RibbonTabs>
        {tabs.map((t, i) => <RibbonTab key={t} $active={i === 0}>{t}</RibbonTab>)}
        <RibbonToggle aria-label="Minimize ribbon">
          <Svg w={13} h={7}><rect width="13" height="7" rx="2" fill={W} /><path d="M4 5h5L6.500 2z" fill="#333" /></Svg>
          <CaretShape />
        </RibbonToggle>
      </RibbonTabs>

      <Ribbon>
        <Panel $w={221}>
          <PanelBody>
            <BigButton $w={42}>{DrawIcons.Line}Line</BigButton>
            <BigButton $w={44}>{DrawIcons.Polyline}Polyline</BigButton>
            <BigButton $w={54}>{DrawIcons.Circle}Circle<CaretShape /></BigButton>
            <BigButton $w={37}>{DrawIcons.Arc}Arc<CaretShape /></BigButton>
            <ToolGrid $cols="34px" $pad={5}><Tools items={DrawSmall} /></ToolGrid>
          </PanelBody>
          <PanelTitle>Draw<CaretShape $big /></PanelTitle>
        </Panel>
        <Panel $w={131}>
          <PanelBody $pad={5}>
            <ToolGrid $cols="29px 29px 41px 20px"><Tools items={ModifyTools} /></ToolGrid>
          </PanelBody>
          <PanelTitle>Modify<CaretShape $big /></PanelTitle>
        </Panel>
        <Panel $w={145}>
          <PanelBody>
            <BigButton $w={44}><TextIcon />Text<CaretShape /></BigButton>
            <BigButton $w={62}><DimIcon />Dimension</BigButton>
            <ToolGrid $cols="34px" $pad={4}><Tools items={AnnoSmall} /></ToolGrid>
          </PanelBody>
          <PanelTitle>Annotation<CaretShape $big /></PanelTitle>
        </Panel>
        <Panel $w={271}>
          <PanelBody>
            <BigButton $w={62}><LayerPropsIcon />Layer<br />Properties</BigButton>
            <LayerArea>
              <LayerBox>
                <Bulb /><Sun /><Lock /><Swatch />
                <LayerSelect aria-label="Current layer" defaultValue="0"><option>0</option></LayerSelect>
                <CaretShape $big />
              </LayerBox>
              <LayerTools><Tools items={LayerToolIcons} /></LayerTools>
            </LayerArea>
          </PanelBody>
          <PanelTitle>Layers<CaretShape $big /></PanelTitle>
        </Panel>
        <Panel $w={77}>
          <PanelBody>
            <BigButton $w={42}><InsertIcon />Insert<CaretShape /></BigButton>
            <ToolGrid $cols="34px"><Tools items={BlockSmall} /></ToolGrid>
          </PanelBody>
          <PanelTitle>Block<CaretShape $big /></PanelTitle>
        </Panel>
        {CollapsedPanels.map(([name, icon]) => (
          <Collapsed key={name}>{icon}{name}<CaretShape $big /></Collapsed>
        ))}
      </Ribbon>

      <FileTabs>
        <FileTab $w={122}>Start</FileTab>
        <FileTab $w={130} $active>
          wwwwwwwwwww*
          <button aria-label="Close tab"><Close s={9} color={c.dim} /></button>
        </FileTab>
        <AddTab $h={18} $ml={12} aria-label="New tab"><Svg w={9} h={9}><path d="M4.500 0v9M0 4.500h9" stroke={c.dim} strokeWidth="1.500" /></Svg></AddTab>
      </FileTabs>

      <Work>
        <Canvas>
          <Plan />
          <ViewLabel>[−][Top][2D Wireframe]</ViewLabel>
          <Cube><ViewCube /></Cube>
          <Wcs>WCS<Svg w={9} h={6}><path d="M1 1h7L4.500 5z" stroke="#b9bcc6" /></Svg></Wcs>
          <NavBar><NavIcons /></NavBar>
        </Canvas>
        <Dock aria-label="Layer tools">
          <Grip />
          {dockGroups.map((g, gi) => (
            <DockGroup key={gi}>
              {g.map(([kind, n, tint], i) => (
                <DockButton key={i} aria-label={`Layer ${kind}`}><DockIcon kind={kind} n={n} tint={tint} /></DockButton>
              ))}
            </DockGroup>
          ))}
        </Dock>
      </Work>

      <Command>
        <CommandSide>
          <Grip />
          <Close s={9} />
          <Svg w={14} h={13}><path d="M1 12l7-7" stroke={W} strokeWidth="3" /><path d="M13 3a3.500 3.500 0 1 1-3-2L9 4l1.500 1z" fill={W} /></Svg>
        </CommandSide>
        <CommandMain>
          <Output>Command: Specify opposite corner or [Fence/WPolygon/CPolygon]:</Output>
          <Prompt>
            <Svg w={16} h={12}><path d="M.500.500h15v11H.500z" fill="#e8e8e8" stroke="#777" /><path d="M1 2h14" stroke="#555" strokeWidth="2" /><path d="M2.500 5l2 1.500-2 1.500M6 8.500h4" stroke="#555" /></Svg>
            <CaretShape $big $color="#555" />
            <PromptInput aria-label="Command" placeholder="Type a command" />
          </Prompt>
          <Swoosh width="280" height="27" fill="none" aria-hidden="true">
            <path d="M10 22C60 -6 110 4 160 18s80 -14 115 -14" stroke="#7fb583" strokeWidth="7" opacity=".08" />
          </Swoosh>
        </CommandMain>
      </Command>

      <LayoutTabs>
        <LayoutTab $w={52} $active>Model</LayoutTab>
        <LayoutTab $w={54}>Layout1</LayoutTab>
        <LayoutTab $w={56}>Layout2</LayoutTab>
        <AddTab $h={17} $ml={-2} aria-label="New layout"><Svg w={9} h={9}><path d="M4.500 0v9M0 4.500h9" stroke={c.dim} strokeWidth="1.500" /></Svg></AddTab>
      </LayoutTabs>

      <StatusBar>
        <StatusButton $w={180} $pad={7}>17754.2051, 6948.3036, 0.0000</StatusButton>
        <StatusButton $w={47}>MODEL</StatusButton>
        {statusItems.map(([name, w, icon, on, caret]) => (
          <StatusButton key={name} $w={w} $on={on} aria-label={name}>{icon}{caret ? <CaretShape $big /> : null}</StatusButton>
        ))}
      </StatusBar>
    </Screen>
  );
}
